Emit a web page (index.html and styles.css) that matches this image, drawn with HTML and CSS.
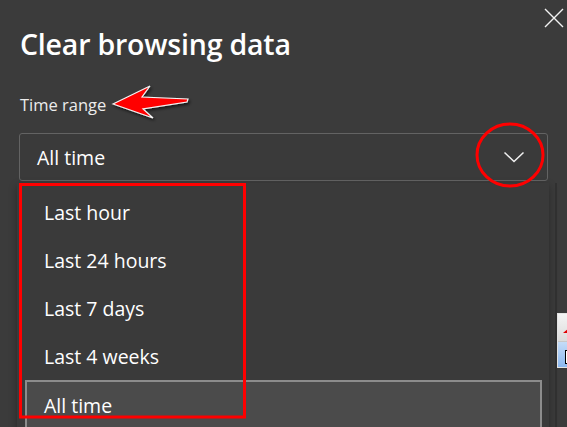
FILE: index.html
```html
<!DOCTYPE html>
<html>
<head>
<meta charset="utf-8">
<link rel="stylesheet" href="styles.css">
</head>
<body>
<div class="dialog">
  <button class="close" aria-label="Close">
    <svg width="20" height="20" viewBox="0 0 20 20"><path d="M1 1 L19 19 M19 1 L1 19" stroke="#f2f2f2" stroke-width="1.4" fill="none"/></svg>
  </button>
  <h1 class="title">Clear browsing data</h1>
  <div class="label">Time range</div>
  <div class="field">
    <div class="select">
      <span class="select-value">All time</span>
      <svg class="chevron" width="22" height="12" viewBox="0 0 22 12"><path d="M1.5 1.5 L11 10.5 L20.5 1.5" stroke="#f0f0f0" stroke-width="1.5" fill="none"/></svg>
    </div>
    <ul class="popup">
      <li class="option">Last hour</li>
      <li class="option">Last 24 hours</li>
      <li class="option">Last 7 days</li>
      <li class="option">Last 4 weeks</li>
      <li class="option selected">All time</li>
    </ul>
  </div>
</div>
<div class="side-edge"></div>
<div class="mini-window">
  <div class="mini-top"><span class="mini-mark"></span></div>
  <div class="mini-body"><span class="mini-box"></span></div>
</div>
<svg class="annotations" width="567" height="427" viewBox="0 0 567 427">
  <defs>
    <filter id="sh" x="-20%" y="-20%" width="150%" height="160%">
      <feDropShadow dx="1.5" dy="2" stdDeviation="1.5" flood-color="#000" flood-opacity="0.6"/>
    </filter>
  </defs>
  <path d="M113 104 L150 86 L142 97 L188 99 L187 102 L143 109 L153 118 Z" fill="#ff0000" stroke="#f4f4f4" stroke-width="1.2" stroke-linejoin="miter" filter="url(#sh)"/>
  <ellipse cx="510" cy="155" rx="33" ry="31" fill="none" stroke="#ff0000" stroke-width="3"/>
  <rect x="20.5" y="184.5" width="224" height="232.5" fill="none" stroke="#ff0000" stroke-width="3"/>
</svg>
</body>
</html>
```
FILE: styles.css
```css
html, body {
  margin: 0;
  padding: 0;
  width: 567px;
  height: 427px;
  overflow: hidden;
  background: #3b3b3b;
  font-family: "Open Sans", "Noto Sans", "Liberation Sans", sans-serif;
  color: #ffffff;
}

.dialog {
  position: relative;
  padding: 25px 19px 0 19px;
}

.close {
  position: absolute;
  top: 8px;
  right: 3px;
  width: 20px;
  height: 20px;
  padding: 0;
  border: none;
  background: transparent;
}

.close svg { display: block; }

.title {
  margin: 0 0 0 1px;
  font-size: 28.5px;
  line-height: 38px;
  font-weight: 600;
  letter-spacing: -0.2px;
  color: #ffffff;
}

.label {
  margin: 31px 0 0 1px;
  font-size: 16.5px;
  line-height: 22px;
  color: #ececec;
}

.field {
  position: relative;
  margin-top: 17px;
}

.select {
  box-sizing: border-box;
  height: 48px;
  border: 1px solid #636363;
  border-radius: 3px;
  background: #3a3a3a;
  display: flex;
  align-items: center;
  justify-content: space-between;
  padding: 0 22px 0 17px;
}

.select-value {
  font-size: 19.5px;
  color: #ffffff;
}

.chevron { display: block; }

.popup {
  position: absolute;
  top: 50px;
  left: -2px;
  width: 532px;
  height: 260px;
  margin: 0;
  padding: 5px 0 0 0;
  list-style: none;
  background: #3a3a3a;
  box-shadow: 0 3px 8px rgba(0,0,0,0.3);
  box-sizing: border-box;
}

.option {
  box-sizing: border-box;
  height: 48px;
  margin: 0 7px 0 8px;
  padding: 0 17px;
  border: 2px solid transparent;
  display: flex;
  align-items: center;
  font-size: 19.5px;
  color: #ffffff;
}

.option.selected {
  background: #4b4b4b;
  border-color: #8c8c8c;
  border-bottom: none;
}

.side-edge {
  position: absolute;
  top: 183px;
  left: 555px;
  width: 2px;
  height: 244px;
  background: #303030;
}

.mini-window {
  position: absolute;
  top: 313px;
  left: 557px;
  width: 12px;
  height: 55px;
  box-sizing: border-box;
  border: 1px solid #e4e4e4;
  display: flex;
  flex-direction: column;
  background: #f0f0f0;
}

.mini-top {
  height: 27px;
  position: relative;
  background: linear-gradient(#f4f4f4, #dcdcdc);
  border-bottom: 1px solid #c8c8c8;
}

.mini-mark {
  position: absolute;
  left: 5px;
  top: 14px;
  width: 0;
  height: 0;
  border-left: 6px solid transparent;
  border-bottom: 5px solid #e00000;
}

.mini-body {
  flex: 1;
  position: relative;
  background: linear-gradient(#c4dcf8, #8cb8f0);
}

.mini-box {
  position: absolute;
  left: 7px;
  top: 8px;
  width: 8px;
  height: 12px;
  background: #ffffff;
  border: 1px solid #000;
}

.annotations {
  position: absolute;
  top: 0;
  left: 0;
  pointer-events: none;
}
```
